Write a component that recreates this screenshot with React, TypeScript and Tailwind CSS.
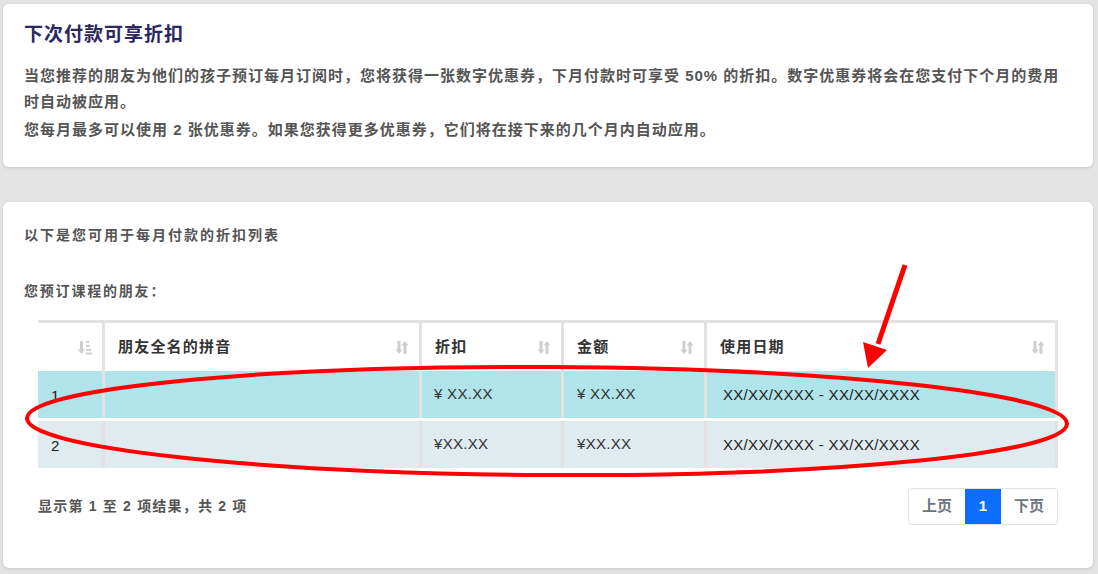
import React from "react";

const font = { fontFamily: '"Liberation Sans", "Noto Sans CJK SC", sans-serif' };

function SortBoth() {
  return (
    <svg width="14" height="15" viewBox="0 0 14 15" className="shrink-0">
      <path d="M4 1v10" stroke="#cfcfcf" strokeWidth="3" />
      <path d="M0.5 9.5L4 14L7.5 9.5Z" fill="#cfcfcf" />
      <path d="M10 14V4" stroke="#cfcfcf" strokeWidth="3" />
      <path d="M6.5 5.5L10 1L13.5 5.5Z" fill="#cfcfcf" />
    </svg>
  );
}

function SortFirst() {
  return (
    <svg width="14" height="15" viewBox="0 0 14 15" className="shrink-0">
      <path d="M3.5 1v10" stroke="#cfcfcf" strokeWidth="3" />
      <path d="M0 9.5L3.5 14L7 9.5Z" fill="#cfcfcf" />
      <rect x="8" y="1" width="3" height="2" fill="#cfcfcf" />
      <rect x="8" y="5" width="4" height="2" fill="#cfcfcf" />
      <rect x="8" y="9" width="5" height="2" fill="#cfcfcf" />
      <rect x="8" y="12.5" width="6" height="2" fill="#cfcfcf" />
    </svg>
  );
}

const cols = ["w-[67px]", "w-[317px]", "w-[142px]", "w-[143px]", "w-[351px]"];

const rows = [
  { n: "1", disc: "¥ XX.XX", amt: "¥ XX.XX", date: "XX/XX/XXXX - XX/XX/XXXX", bg: "bg-[#b1e3ea]" },
  { n: "2", disc: "¥XX.XX", amt: "¥XX.XX", date: "XX/XX/XXXX - XX/XX/XXXX", bg: "bg-[#e0ebf0]" },
];

export default function App() {
  return (
    <div className="relative w-[1098px] h-[574px] overflow-hidden bg-[#e3e3e3] pt-[4px] pl-[3px] pr-[5px]" style={font}>
      {/* Intro card */}
      <div className="h-[163px] bg-white rounded-[6px] shadow-[0_1px_3px_rgba(0,0,0,0.12)] px-[21px] pt-[18px]">
        <h1 className="text-[19px] leading-[26px] font-bold tracking-[1px] text-[#2a285e]">下次付款可享折扣</h1>
        <p className="mt-[15px] text-[15px] leading-[26px] font-semibold tracking-[1px] text-[#555]">
          当您推荐的朋友为他们的孩子预订每月订阅时，您将获得一张数字优惠券，下月付款时可享受 50% 的折扣。数字优惠券将会在您支付下个月的费用
          <br />
          时自动被应用。
        </p>
        <p className="mt-[2px] text-[15px] leading-[26px] font-semibold tracking-[1px] text-[#555]">
          您每月最多可以使用 2 张优惠券。如果您获得更多优惠券，它们将在接下来的几个月内自动应用。
        </p>
      </div>

      {/* Discounts card */}
      <div className="mt-[35px] h-[366px] bg-white rounded-[6px] shadow-[0_1px_3px_rgba(0,0,0,0.12)] px-[21px] pt-[23px]">
        <p className="text-[14px] leading-[20px] font-semibold tracking-[2px] text-[#555]">以下是您可用于每月付款的折扣列表</p>
        <p className="mt-[36px] text-[14px] leading-[20px] font-semibold tracking-[1.8px] text-[#555]">您预订课程的朋友：</p>

        <div className="mx-[14px] mt-[19px]">
          {/* header */}
          <div className="flex border-t-[3px] border-[#e2e2e2] h-[51px] bg-white">
            <div className={`${cols[0]} border-r-[3px] border-[#e2e2e2] flex items-center justify-end pr-[10px]`}>
              <SortFirst />
            </div>
            {["朋友全名的拼音", "折扣", "金额", "使用日期"].map((h, i) => (
              <div
                key={h}
                className={`${cols[i + 1]} border-r-[3px] border-[#e2e2e2] flex items-center justify-between pl-[13px] pr-[10px]`}
              >
                <span className="text-[15px] font-bold tracking-[1.2px] text-[#333]">{h}</span>
                <SortBoth />
              </div>
            ))}
          </div>
          {/* body */}
          {rows.map((r, ri) => (
            <div key={r.n} className={`flex h-[47px] ${r.bg} ${ri === 0 ? "mb-[3px]" : ""}`}>
              <div className={`${cols[0]} border-r-[3px] border-[#e2e2e2] flex items-center pl-[13px] pt-[4px] text-[15px] text-[#222]`}>
                {r.n}
              </div>
              <div className={`${cols[1]} border-r-[3px] border-[#e2e2e2]`} />
              <div className={`${cols[2]} border-r-[3px] border-[#e2e2e2] flex items-center pl-[12px] text-[15px] tracking-[0.3px] text-[#333]`}>
                {r.disc}
              </div>
              <div className={`${cols[3]} border-r-[3px] border-[#e2e2e2] flex items-center pl-[13px] text-[15px] tracking-[0.3px] text-[#333]`}>
                {r.amt}
              </div>
              <div className={`${cols[4]} border-r-[3px] border-[#e2e2e2] flex items-center pl-[16px] pt-[2px] text-[15px] tracking-[0.3px] text-[#222]`}>
                {r.date}
              </div>
            </div>
          ))}

          {/* footer */}
          <div className="flex items-center justify-between mt-[20px]">
            <span className="text-[14px] font-semibold tracking-[1.2px] text-[#555]">显示第 1 至 2 项结果，共 2 项</span>
            <div className="flex h-[37px] border border-[#dee2e6] rounded-[4px] overflow-hidden text-[15px] font-bold">
              <div className="w-[56px] flex items-center justify-center text-[#6c757d]">上页</div>
              <div className="w-[36px] flex items-center justify-center bg-[#0d6efd] text-white">1</div>
              <div className="w-[56px] flex items-center justify-center text-[#6c757d]">下页</div>
            </div>
          </div>
        </div>
      </div>

      {/* red annotation overlay */}
      <svg className="absolute left-0 top-0 pointer-events-none" width="1098" height="574" viewBox="0 0 1098 574">
        <ellipse cx="547" cy="421" rx="520" ry="54" fill="none" stroke="#ff0000" strokeWidth="4" transform="rotate(0.3 547 421)" />
        <line x1="905" y1="265" x2="878" y2="344" stroke="#ff0000" strokeWidth="5" />
        <path d="M868 368L863 342L887 350Z" fill="#ff0000" />
      </svg>
    </div>
  );
}
